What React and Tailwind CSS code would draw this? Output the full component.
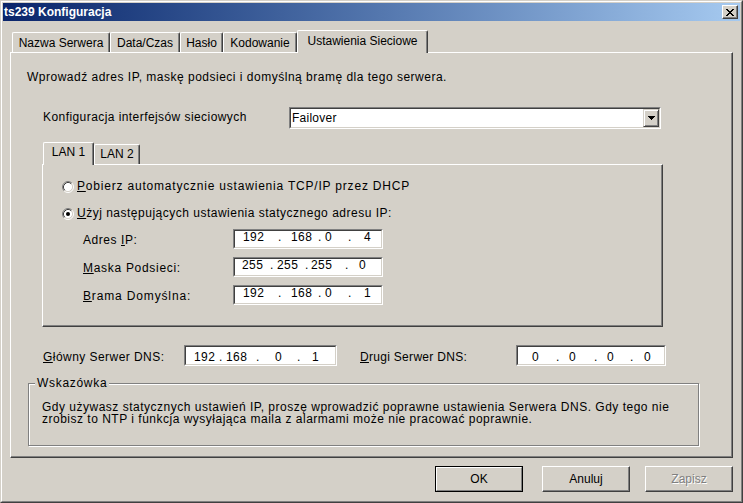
import React from "react";

const FONT = "[font-family:'Liberation_Sans',Arial,sans-serif]";

function Sunken({ className = "", innerClass = "", children }) {
  return (
    <div className={`border border-t-[#808080] border-l-[#808080] border-r-white border-b-white ${className}`}>
      <div className={`h-full border border-t-[#404040] border-l-[#404040] border-r-[#d4d0c8] border-b-[#d4d0c8] bg-white ${innerClass}`}>
        {children}
      </div>
    </div>
  );
}

function IPBox({ cells, className = "", innerClass = "" }) {
  return (
    <Sunken className={className} innerClass={`flex items-start leading-[12px] whitespace-nowrap tracking-[0.4px] ${innerClass}`}>
      {cells.map(([t, c], i) => (
        <span key={i} className={`shrink-0 ${c}`}>{t}</span>
      ))}
    </Sunken>
  );
}

function Radio({ checked }) {
  return (
    <svg width="12" height="12" viewBox="0 0 12 12" className="shrink-0 mt-[2px]">
      <circle cx="6" cy="6" r="4.5" fill="#fff" />
      <path d="M2.11 9.89A5.5 5.5 0 0 1 9.89 2.11" stroke="#808080" fill="none" />
      <path d="M9.89 2.11A5.5 5.5 0 0 1 2.11 9.89" stroke="#fff" fill="none" />
      <path d="M2.82 9.18A4.5 4.5 0 0 1 9.18 2.82" stroke="#404040" fill="none" />
      <path d="M9.18 2.82A4.5 4.5 0 0 1 2.82 9.18" stroke="#d4d0c8" fill="none" />
      {checked && <circle cx="6" cy="6" r="2" fill="#000" />}
    </svg>
  );
}

function U({ children }) {
  return <span className="underline underline-offset-[1px]">{children}</span>;
}

const tabBase =
  "shrink-0 text-center leading-[14px] whitespace-nowrap border-t border-l border-r border-t-white border-l-white border-r-[#404040] shadow-[inset_-1px_0_0_#808080] rounded-t-[2px] bg-[#d4d0c8]";

const rowA = [
  ["192", "w-[35px]"],
  [".", "w-[13px]"],
  ["168", "w-[27px]"],
  [".", "w-[7px]"],
  ["0", "w-[23px]"],
  [".", "w-[16px]"],
];

export default function App() {
  return (
    <div
      className={`w-[743px] h-[503px] ${FONT} text-[12px] text-black bg-[#d4d0c8] border border-t-[#d4d0c8] border-l-[#d4d0c8] border-r-[#404040] border-b-[#404040]`}
    >
      <div className="h-full border border-t-white border-l-white border-r-[#808080] border-b-[#808080] p-[1px] flex flex-col">
        {/* Title bar */}
        <div className="h-[18px] shrink-0 flex items-center bg-linear-to-r from-[#0a246a] to-[#a6caf0] pl-[1px] pr-[2px]">
          <span className="flex-1 font-bold text-white leading-[14px]">ts239 Konfiguracja</span>
          <div className="w-[16px] h-[14px] border border-t-white border-l-white border-r-[#404040] border-b-[#404040] bg-[#d4d0c8] shadow-[inset_-1px_-1px_0_#808080] flex items-center justify-center">
            <svg width="8" height="7" viewBox="0 0 8 7" shapeRendering="crispEdges">
              <path
                fill="#000"
                d="M0 0h2v1H0zM6 0h2v1H6zM1 1h2v1H1zM5 1h2v1H5zM2 2h4v1H2zM3 3h2v1H3zM2 4h4v1H2zM1 5h2v1H1zM5 5h2v1H5zM0 6h2v1H0zM6 6h2v1H6z"
              />
            </svg>
          </div>
        </div>

        {/* Tab control */}
        <div className="ml-[7px] mt-[9px] w-[723px]">
          <div className="h-[22px] flex items-end pl-[2px]">
            <div className={`${tabBase} w-[98px] h-[20px] pt-[3px]`}>Nazwa Serwera</div>
            <div className={`${tabBase} w-[70px] h-[20px] pt-[3px]`}>Data/Czas</div>
            <div className={`${tabBase} w-[43px] h-[20px] pt-[3px]`}>Hasło</div>
            <div className={`${tabBase} w-[74px] h-[20px] pt-[3px]`}>Kodowanie</div>
            <div className={`${tabBase} relative z-10 w-[131px] h-[23px] -mb-[1px] pt-[3px]`}>Ustawienia Sieciowe</div>
          </div>

          <div className="h-[406px] border border-t-white border-l-white border-r-[#404040] border-b-[#404040] shadow-[inset_-1px_-1px_0_#808080] pl-[16px] flex flex-col items-start">
            <p className="mt-[17px] leading-[14px] whitespace-nowrap tracking-[0.5px]">
              Wprowadź adres IP, maskę podsieci i domyślną bramę dla tego serwera.
            </p>

            <div className="mt-[23px] flex h-[22px]">
              <span className="ml-[16px] w-[246px] pt-[3px] leading-[14px] whitespace-nowrap tracking-[0.43px]">
                Konfiguracja interfejsów sieciowych
              </span>
              <Sunken className="w-[372px] h-[22px]" innerClass="flex">
                <span className="flex-1 pl-[1px] pt-[2px] leading-[14px] tracking-[0.25px]">Failover</span>
                <div className="w-[16px] h-full border border-t-[#d4d0c8] border-l-[#d4d0c8] border-r-[#404040] border-b-[#404040] shadow-[inset_1px_1px_0_#fff,inset_-1px_-1px_0_#808080] bg-[#d4d0c8] flex items-center justify-center">
                  <svg width="7" height="4" viewBox="0 0 7 4" shapeRendering="crispEdges">
                    <path fill="#000" d="M0 0h7v1H0zM1 1h5v1H1zM2 2h3v1H2zM3 3h1v1H3z" />
                  </svg>
                </div>
              </Sunken>
            </div>

            {/* LAN tabs */}
            <div className="mt-[13px] ml-[15px] h-[22px] flex items-end pl-[1px]">
              <div className={`${tabBase} relative z-10 w-[51px] h-[23px] -mb-[1px] pt-[2px]`}>LAN 1</div>
              <div className={`${tabBase} w-[46px] h-[20px] pt-[2px]`}>LAN 2</div>
            </div>
            <div className="ml-[15px] w-[621px] h-[163px] border border-t-white border-l-white border-r-[#404040] border-b-[#404040] shadow-[inset_-1px_-1px_0_#808080] pl-[19px] pt-[14px] flex flex-col">
              <div className="flex items-start h-[14px]">
                <Radio />
                <span className="ml-[3px] leading-[14px] whitespace-nowrap tracking-[0.8px]">
                  <U>P</U>obierz automatycznie ustawienia TCP/IP przez DHCP
                </span>
              </div>
              <div className="mt-[13px] flex items-start h-[14px]">
                <Radio checked />
                <span className="ml-[3px] leading-[14px] whitespace-nowrap tracking-[0.5px]">
                  <U>U</U>żyj następujących ustawienia statycznego adresu IP:
                </span>
              </div>

              <div className="mt-[9px] flex items-start">
                <span className="ml-[21px] w-[150px] mt-[4px] leading-[14px] tracking-[0.55px]">
                  Adres <U>I</U>P:
                </span>
                <IPBox className="w-[150px] h-[20px]" innerClass="pl-[8px]" cells={[...rowA, ["4", ""]]} />
              </div>
              <div className="mt-[8px] flex items-start">
                <span className="ml-[21px] w-[150px] mt-[4px] leading-[14px] tracking-[0.7px]">
                  <U>M</U>aska Podsieci:
                </span>
                <IPBox
                  className="w-[150px] h-[20px]"
                  innerClass="pl-[7px]"
                  cells={[
                    ["255", "w-[28px]"],
                    [".", "w-[7px]"],
                    ["255", "w-[28px]"],
                    [".", "w-[6px]"],
                    ["255", "w-[34px]"],
                    [".", "w-[14px]"],
                    ["0", ""],
                  ]}
                />
              </div>
              <div className="mt-[8px] flex items-start">
                <span className="ml-[21px] w-[150px] mt-[4px] leading-[14px] tracking-[0.85px]">
                  <U>B</U>rama Domyślna:
                </span>
                <IPBox className="w-[150px] h-[20px]" innerClass="pl-[8px]" cells={[...rowA, ["1", ""]]} />
              </div>
            </div>

            {/* DNS row */}
            <div className="mt-[18px] flex items-start h-[21px]">
              <span className="ml-[16px] w-[141px] mt-[5px] leading-[14px] whitespace-nowrap tracking-[0.45px]">
                <U>G</U>łówny Serwer DNS:
              </span>
              <IPBox
                className="w-[153px] h-[21px]"
                innerClass="pl-[8px] pt-[4px]"
                cells={[
                  ["192", "w-[25px]"],
                  [".", "w-[7px]"],
                  ["168", "w-[30px]"],
                  [".", "w-[19px]"],
                  ["0", "w-[22px]"],
                  [".", "w-[15px]"],
                  ["1", ""],
                ]}
              />
              <span className="ml-[23px] w-[156px] mt-[5px] leading-[14px] whitespace-nowrap tracking-[0.3px]">
                <U>D</U>rugi Serwer DNS:
              </span>
              <IPBox
                className="w-[150px] h-[21px]"
                innerClass="pl-[14px] pt-[4px]"
                cells={[
                  ["0", "w-[24px]"],
                  [".", "w-[13px]"],
                  ["0", "w-[25px]"],
                  [".", "w-[13px]"],
                  ["0", "w-[23px]"],
                  [".", "w-[14px]"],
                  ["0", ""],
                ]}
              />
            </div>

            {/* Hint group */}
            <fieldset className="mt-[10px] ml-[1px] w-[671px] border border-[#808080] shadow-[inset_1px_1px_0_#fff,1px_1px_0_#fff] pl-[13px] pt-[11px] pb-[20px]">
              <legend className="-ml-[7px] px-[2px] bg-[#d4d0c8] leading-[14px] tracking-[0.7px]">Wskazówka</legend>
              <p className="leading-[12px] whitespace-nowrap tracking-[0.5px]">
                Gdy używasz statycznych ustawień IP, proszę wprowadzić poprawne ustawienia Serwera DNS. Gdy tego nie
                <br />
                zrobisz to NTP i funkcja wysyłająca maila z alarmami może nie pracować poprawnie.
              </p>
            </fieldset>
          </div>
        </div>

        {/* Buttons */}
        <div className="mt-[8px] flex h-[26px]">
          <div className="ml-[432px] w-[88px] h-full border border-black">
            <div className="h-full border border-t-white border-l-white border-r-[#808080] border-b-[#808080] flex items-center justify-center leading-[14px]">
              OK
            </div>
          </div>
          <div className="ml-[19px] w-[88px] h-full border border-t-white border-l-white border-r-[#404040] border-b-[#404040] shadow-[inset_-1px_-1px_0_#808080] flex items-center justify-center leading-[14px]">
            Anuluj
          </div>
          <div className="ml-[15px] w-[88px] h-full border border-t-white border-l-white border-r-[#404040] border-b-[#404040] shadow-[inset_-1px_-1px_0_#808080] flex items-center justify-center leading-[14px] text-[#808080] [text-shadow:1px_1px_0_#fff]">
            Zapisz
          </div>
        </div>
      </div>
    </div>
  );
}
